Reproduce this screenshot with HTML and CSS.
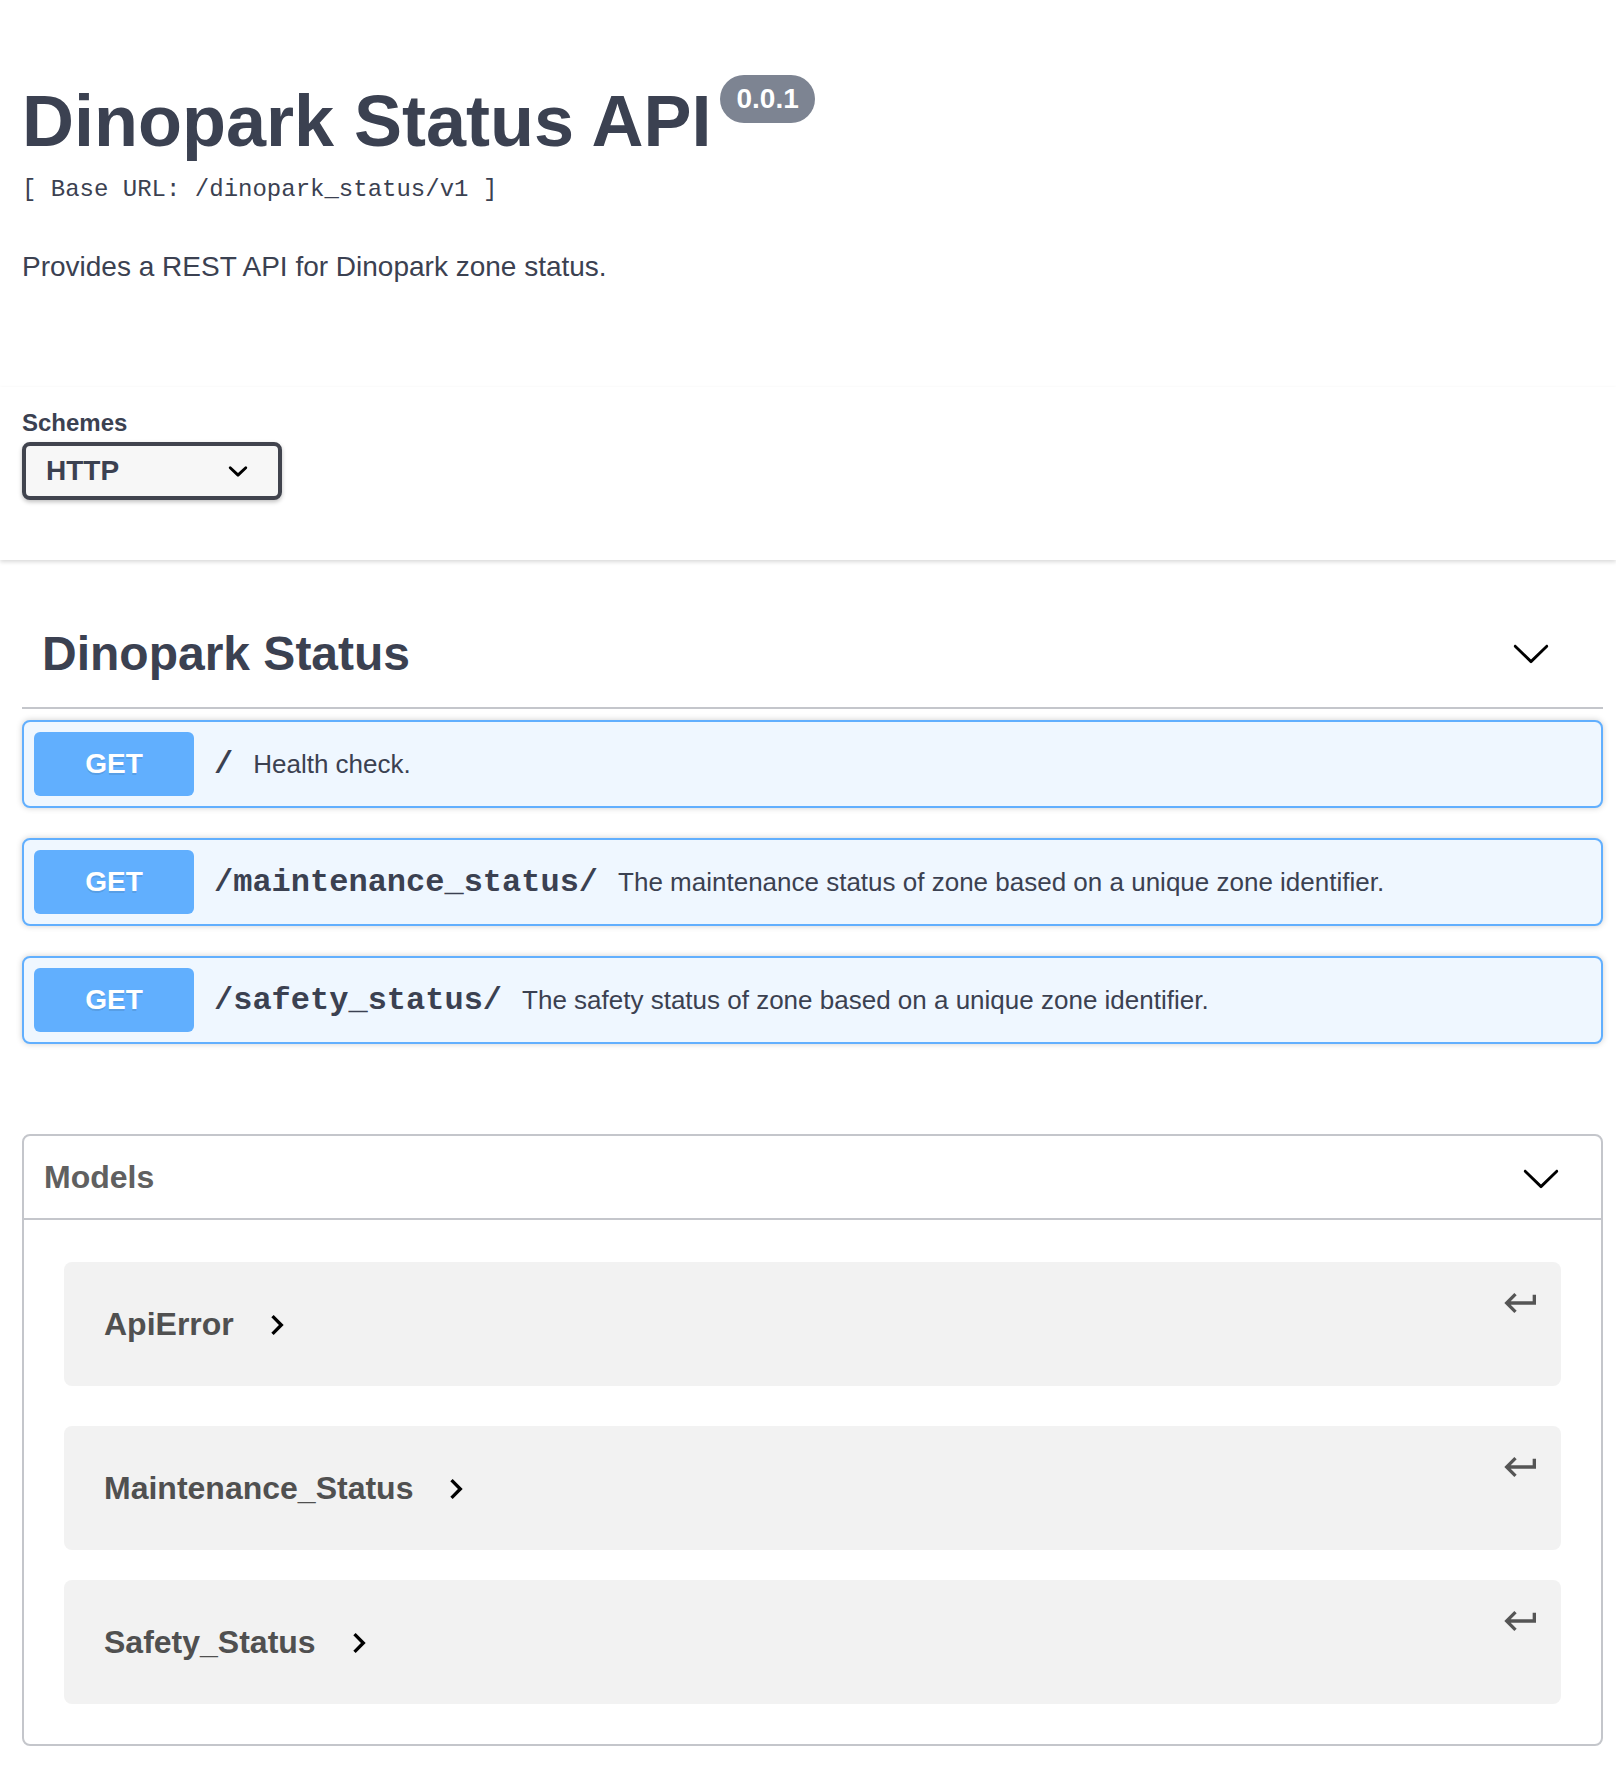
FILE: index.html
```html
<!DOCTYPE html>
<html lang="en">
<head>
<meta charset="utf-8">
<title>Dinopark Status API</title>
<link rel="stylesheet" href="styles.css">
</head>
<body>
<div class="info">
  <div class="title-row">
    <h2 class="title">Dinopark Status API</h2>
    <span class="version">0.0.1</span>
  </div>
  <div class="base-url">[ Base URL: /dinopark_status/v1 ]</div>
  <p class="description">Provides a REST API for Dinopark zone status.</p>
</div>

<div class="scheme-container">
  <div class="schemes-title">Schemes</div>
  <div class="select">
    <span class="select-value">HTTP</span>
    <svg class="select-arrow" width="40" height="40" viewBox="0 0 20 20"><path d="M13.418 7.859a.695.695 0 01.978 0 .68.68 0 010 .969l-3.908 3.83a.697.697 0 01-.979 0l-3.908-3.83a.68.68 0 010-.969.695.695 0 01.978 0L10 11l3.418-3.141z" fill="#000"/></svg>
  </div>
</div>

<div class="main">
  <h3 class="tag">
    <span class="tag-name">Dinopark Status</span>
    <svg class="tag-arrow" width="40" height="40" viewBox="0 0 20 20"><path d="M17.418 6.109c.272-.268.709-.268.979 0s.271.701 0 .969l-7.908 7.83c-.27.268-.707.268-.979 0l-7.908-7.830c-.27-.268-.27-.701 0-.969.271-.268.709-.268.979 0L10 13.25l7.418-7.141z" fill="#000"/></svg>
  </h3>

  <div class="ops">
    <div class="opblock">
      <span class="method">GET</span>
      <span class="path">/</span>
      <span class="summary">Health check.</span>
    </div>
    <div class="opblock">
      <span class="method">GET</span>
      <span class="path">/maintenance_status/</span>
      <span class="summary">The maintenance status of zone based on a unique zone identifier.</span>
    </div>
    <div class="opblock">
      <span class="method">GET</span>
      <span class="path">/safety_status/</span>
      <span class="summary">The safety status of zone based on a unique zone identifier.</span>
    </div>
  </div>

  <section class="models">
    <h4 class="models-head">
      <span>Models</span>
      <svg class="models-arrow" width="40" height="40" viewBox="0 0 20 20"><path d="M17.418 6.109c.272-.268.709-.268.979 0s.271.701 0 .969l-7.908 7.83c-.27.268-.707.268-.979 0l-7.908-7.83c-.27-.268-.27-.701 0-.969.271-.268.709-.268.979 0L10 13.25l7.418-7.141z" fill="#000"/></svg>
    </h4>
    <div class="model-list">
      <div class="model-container first">
        <span class="model-title">ApiError</span>
        <svg class="model-toggle" width="40" height="40" viewBox="0 0 24 24"><path d="M10 6L8.590 7.41 13.17 12l-4.58 4.59L10 18l6-6z" fill="#000"/></svg>
        <svg class="jump" width="40" height="40" viewBox="0 0 24 24"><path d="M19 7v4H5.83l3.58-3.59L8 6l-6 6 6 6 1.41-1.41L5.83 13H21V7z" fill="#555"/></svg>
      </div>
      <div class="model-container">
        <span class="model-title">Maintenance_Status</span>
        <svg class="model-toggle" width="40" height="40" viewBox="0 0 24 24"><path d="M10 6L8.59 7.41 13.17 12l-4.58 4.59L10 18l6-6z" fill="#000"/></svg>
        <svg class="jump" width="40" height="40" viewBox="0 0 24 24"><path d="M19 7v4H5.83l3.58-3.59L8 6l-6 6 6 6 1.41-1.41L5.83 13H21V7z" fill="#555"/></svg>
      </div>
      <div class="model-container">
        <span class="model-title">Safety_Status</span>
        <svg class="model-toggle" width="40" height="40" viewBox="0 0 24 24"><path d="M10 6L8.59 7.41 13.17 12l-4.58 4.59L10 18l6-6z" fill="#000"/></svg>
        <svg class="jump" width="40" height="40" viewBox="0 0 24 24"><path d="M19 7v4H5.83l3.58-3.59L8 6l-6 6 6 6 1.41-1.41L5.83 13H21V7z" fill="#555"/></svg>
      </div>
    </div>
  </section>
</div>
</body>
</html>
```

FILE: styles.css
```css
* { box-sizing: border-box; }

body {
  margin: 0;
  background: #fff;
  font-family: "Liberation Sans", Arial, Helvetica, sans-serif;
  color: #3b4151;
}

.info {
  padding: 80px 13px 0 22px;
}

.title-row {
  display: flex;
  align-items: flex-start;
}

.title {
  margin: 0;
  font-size: 72px;
  line-height: 82px;
  font-weight: 700;
  color: #3b4151;
}

.version {
  margin: -5px 0 0 9px;
  height: 48px;
  padding: 0 16px;
  border-radius: 114px;
  background: #7d8492;
  color: #fff;
  font-size: 28px;
  font-weight: 700;
  line-height: 48px;
}

.base-url {
  margin-top: 14px;
  font-family: "Liberation Mono", "Courier New", monospace;
  font-size: 24px;
  line-height: 28px;
  color: #3b4151;
}

.description {
  margin: 42px 0 0;
  font-size: 28px;
  line-height: 42px;
  color: #3b4151;
}

.scheme-container {
  margin-top: 99px;
  padding: 22px 13px 60px 22px;
  background: #fff;
  box-shadow: 0 2px 4px 0 rgba(0, 0, 0, 0.15);
}

.schemes-title {
  font-size: 24px;
  line-height: 28px;
  font-weight: 700;
  color: #3b4151;
}

.select {
  margin-top: 5px;
  width: 260px;
  height: 58px;
  display: flex;
  align-items: center;
  justify-content: space-between;
  padding: 0 20px 0 20px;
  border: 4px solid #41444e;
  border-radius: 8px;
  background: #f7f7f7;
  box-shadow: 0 2px 4px 0 rgba(0, 0, 0, 0.25);
}

.select-value {
  font-size: 28px;
  font-weight: 700;
  color: #3b4151;
}

.select-arrow {
  display: block;
}

.main {
  padding: 0 13px 0 22px;
}

.tag {
  margin: 39px 0 11px;
  height: 110px;
  display: flex;
  align-items: center;
  justify-content: space-between;
  padding: 0 52px 0 20px;
  border-bottom: 2px solid #c4c6cb;
  font-size: 48px;
  font-weight: 700;
  color: #3b4151;
}

.tag-arrow { display: block; }

.ops {
  display: flex;
  flex-direction: column;
  gap: 30px;
}

.opblock {
  height: 88px;
  display: flex;
  align-items: center;
  padding: 0 10px;
  border: 2px solid #61affe;
  border-radius: 8px;
  background: #eff7ff;
  box-shadow: 0 0 6px rgba(0, 0, 0, 0.19);
}

.method {
  width: 160px;
  height: 64px;
  display: flex;
  align-items: center;
  justify-content: center;
  border-radius: 6px;
  background: #61affe;
  color: #fff;
  font-size: 28px;
  font-weight: 700;
  text-shadow: 0 2px 0 rgba(0, 0, 0, 0.1);
}

.path {
  padding: 0 20px;
  font-family: "Liberation Mono", "Courier New", monospace;
  font-size: 32px;
  font-weight: 700;
  color: #3b4151;
}

.summary {
  font-size: 26px;
  color: #3b4151;
}

.models {
  margin-top: 90px;
  border: 2px solid #c4c6cb;
  border-radius: 8px;
}

.models-head {
  margin: 0;
  height: 84px;
  display: flex;
  align-items: center;
  justify-content: space-between;
  padding: 0 40px 0 20px;
  border-bottom: 2px solid #c4c6cb;
  font-size: 32px;
  font-weight: 700;
  color: #606060;
}

.models-arrow { display: block; margin-top: 2px; }

.model-list {
  display: flex;
  flex-direction: column;
  gap: 30px;
  padding: 42px 40px 40px;
}

.model-container {
  height: 124px;
  display: flex;
  align-items: center;
  padding-left: 40px;
  border-radius: 8px;
  background: #f2f2f2;
}

.model-container.first { margin-bottom: 10px; }

.model-title {
  font-size: 32px;
  font-weight: 700;
  color: #505050;
}

.model-toggle {
  display: block;
  margin-left: 23px;
  margin-top: 2px;
}

.jump {
  display: block;
  align-self: flex-start;
  margin: 21px 20px 0 auto;
}
```
